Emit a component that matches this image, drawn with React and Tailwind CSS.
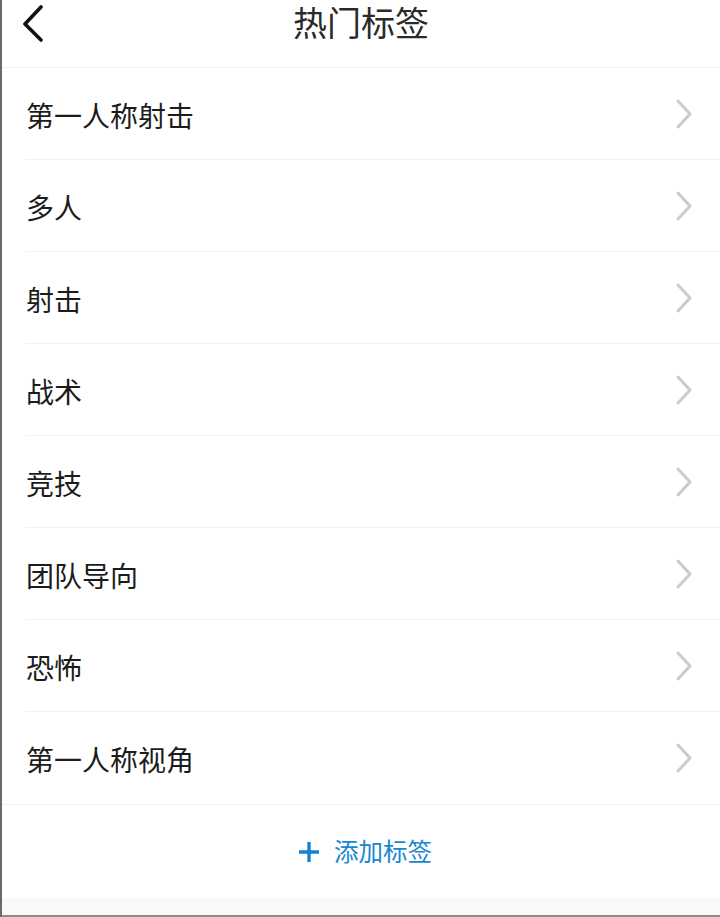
import React from 'react';

const tags = ['第一人称射击', '多人', '射击', '战术', '竞技', '团队导向', '恐怖', '第一人称视角'];

function Chevron() {
  return (
    <svg width="20" height="32" viewBox="0 0 20 32" fill="none">
      <path d="M4 3 L16 16 L4 29" stroke="#c9cccf" strokeWidth="3" strokeLinecap="round" strokeLinejoin="round" />
    </svg>
  );
}

export default function App() {
  return (
    <div
      className="w-[720px] h-[917px] flex bg-white overflow-hidden"
      style={{ fontFamily: '"Noto Sans CJK SC", "Noto Sans", sans-serif' }}
    >
      <div className="w-[2px] bg-[#6a6a6a] shrink-0" />
      <div className="flex-1 flex flex-col">
        {/* header */}
        <div className="relative h-[68px] border-b border-[#f1f2f3] flex justify-center items-start shrink-0">
          <button className="absolute left-[16px] top-[4px] w-[30px] h-[38px] flex items-center justify-center">
            <svg width="26" height="38" viewBox="0 0 26 38" fill="none">
              <path d="M21 3 L5 20 L21 36" stroke="#111" strokeWidth="3.6" strokeLinecap="round" strokeLinejoin="round" />
            </svg>
          </button>
          <h1 className="text-[34px] leading-[44px] text-[#2a2a2a]">热门标签</h1>
        </div>

        {/* list */}
        <div className="flex flex-col">
          {tags.map((tag, index) => (
            <div key={index} className="pl-[24px]">
              <div
                className={
                  'h-[92px] flex items-center justify-between pr-[26px] ' +
                  (index < tags.length - 1 ? 'border-b border-[#f1f2f3]' : '')
                }
              >
                <span className="text-[28px] text-[#1c1c1c] mt-[2px]">{tag}</span>
                <Chevron />
              </div>
            </div>
          ))}
        </div>

        {/* add tag */}
        <div className="border-t border-[#f1f2f3] h-[94px] flex items-center justify-center gap-[14px] pl-[8px] shrink-0">
          <svg width="22" height="22" viewBox="0 0 22 22" fill="none">
            <path d="M11 1 V21 M1 11 H21" stroke="#1683cf" strokeWidth="3.4" />
          </svg>
          <span className="text-[24.5px] text-[#1a86cf]">添加标签</span>
        </div>

        <div className="flex-1 bg-[#f7f9fa]" />
        <div className="h-[2px] bg-[#8a8a8a] shrink-0" />
      </div>
    </div>
  );
}
